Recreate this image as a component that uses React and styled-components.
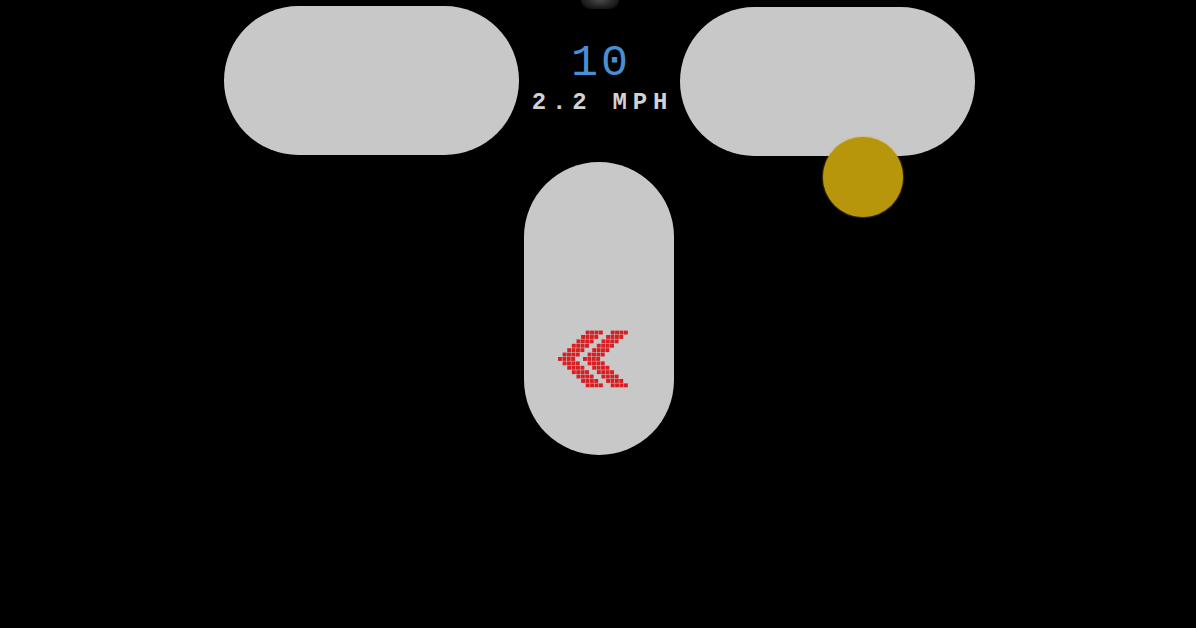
import React from "react";
import styled, { createGlobalStyle } from "styled-components";

const GlobalStyle = createGlobalStyle`
    html, body {
        margin: 0;
        padding: 0;
        background: #000;
    }
    body {
        font-family: "Liberation Mono", "DejaVu Sans Mono", monospace;
    }
`;

const Screen = styled.div`
    width: 1196px;
    height: 628px;
    background: #000;
    display: flex;
    flex-direction: column;
    align-items: center;
    padding-top: 6px;
    box-sizing: border-box;
    overflow: hidden;
`;

const TopRow = styled.div`
    display: flex;
    align-items: flex-start;
    padding-left: 3px;
`;

const Pill = styled.div`
    position: relative;
    width: ${({ $w }) => $w}px;
    height: ${({ $h }) => $h}px;
    border-radius: ${({ $w, $h }) => Math.min($w, $h) / 2}px;
    background: #c8c8c8;
    margin-top: ${({ $top }) => $top || 0}px;
    margin-left: ${({ $left }) => $left || 0}px;
    display: flex;
    align-items: center;
    justify-content: center;
`;

const Center = styled.div`
    position: relative;
    width: 161px;
    display: flex;
    flex-direction: column;
    align-items: center;
    padding-top: 35px;
`;

const TopGlow = styled.div`
    position: absolute;
    top: -6px;
    left: 62px;
    width: 38px;
    height: 9px;
    border-radius: 0 0 19px 19px;
    background: radial-gradient(ellipse at 50% 0%, #4a4a4a 0%, #222 55%, transparent 100%);
`;

const Speed = styled.div`
    color: #4a8fd3;
    font-size: 45px;
    line-height: 45px;
    letter-spacing: 3px;
    margin-left: 3px;
`;

const Mph = styled.div`
    color: #d2d2d2;
    font-size: 24px;
    font-weight: bold;
    line-height: 24px;
    letter-spacing: 5.8px;
    margin-left: 6px;
    margin-top: 5px;
`;

const Coin = styled.div`
    position: absolute;
    left: 143px;
    top: 130px;
    width: 80px;
    height: 80px;
    border-radius: 50%;
    background: #b8960c;
    box-shadow: 0 0 2px #c8a418;
`;

const ArrowWrap = styled.div`
    margin-top: 100px;
    margin-left: -2px;
    display: flex;
`;

const CELL = 4.4;

function chevronCells(x0) {
    const cells = [];
    for (let r = -6; r <= 6; r++) {
        for (let k = 0; k < 4; k++) {
            cells.push([x0 + (Math.abs(r) * 1.05 + k) * CELL, 28 + r * CELL]);
        }
    }
    return cells;
}

function DoubleChevron() {
    const cells = [...chevronCells(0), ...chevronCells(25)];
    return (
        <svg width="80" height="60" viewBox="0 0 80 60">
            {cells.map(([x, y], i) => (
                <rect
                    key={i}
                    x={x}
                    y={y}
                    width={CELL - 0.5}
                    height={CELL - 0.5}
                    fill="#d81e22"
                />
            ))}
        </svg>
    );
}

export default function App() {
    return (
        <Screen>
            <GlobalStyle />
            <TopRow>
                <Pill $w={295} $h={149} />
                <Center>
                    <TopGlow />
                    <Speed>10</Speed>
                    <Mph>2.2 MPH</Mph>
                </Center>
                <Pill $w={295} $h={149} $top={1}>
                    <Coin />
                </Pill>
            </TopRow>
            <Pill $w={150} $h={293} $top={6} $left={2}>
                <ArrowWrap>
                    <DoubleChevron />
                </ArrowWrap>
            </Pill>
        </Screen>
    );
}
